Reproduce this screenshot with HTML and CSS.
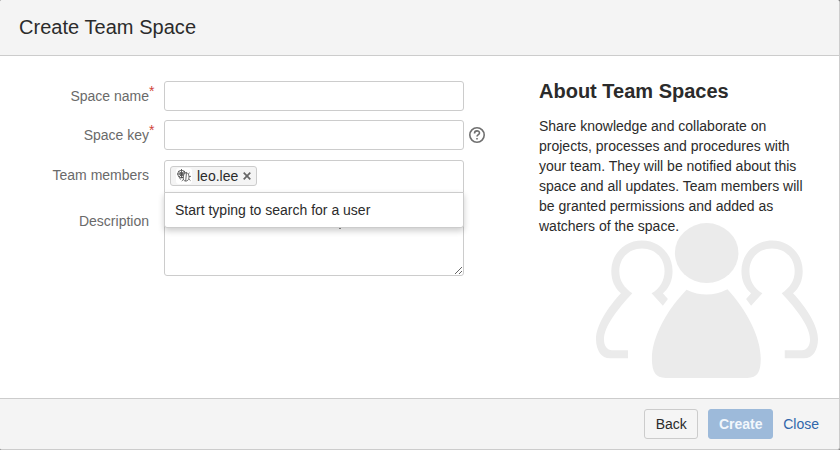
FILE: index.html
```
<!DOCTYPE html>
<html lang="en">
<head>
<meta charset="utf-8">
<title>Create Team Space</title>
<link rel="stylesheet" href="styles.css">
</head>
<body>
<section class="dialog">
  <header class="dialog-header"><h1>Create Team Space</h1></header>
  <main class="dialog-body">
    <form class="form">
      <div class="row">
        <label class="label" for="name">Space name<span class="required">*</span></label>
        <input class="field" id="name" type="text">
      </div>
      <div class="row">
        <label class="label" for="key">Space key<span class="required">*</span></label>
        <input class="field" id="key" type="text">
        <svg class="help" viewBox="0 0 16 16"><circle cx="8" cy="8" r="7.200"/><path d="M5.500 6.400C5.500 3.100 10.500 3.200 10.500 6C10.500 7.700 8 7.500 8 9.500M8 10.900V12.600"/></svg>
      </div>
      <div class="row row-members">
        <span class="label">Team members</span>
        <div class="picker">
          <span class="chip">
            <svg class="avatar" viewBox="0 0 16 16"><rect width="16" height="16" rx="3" fill="#fff"/><g fill="none" stroke="#484848" stroke-width=".8"><circle cx="5.500" cy="6" r="3.800"/><circle cx="5.500" cy="6" r="1.700"/><path d="M5.500 1V10M1 6H9.500M2.500 3L8 8.500M8.500 3L3 9M3.500 9.500L4.500 11.500"/><path fill="#fff" d="M10.300 4.500C13.300 5.200 13.800 10.500 11.800 12.300C9.800 14 7.200 13 7.200 10C7.200 7.200 8.300 4.900 10.300 4.500Z"/><path d="M10.500 4.500L9.700 13M9 4.800L8 3.500M12.300 6L13.600 4.800M13 8.700L15 8.300M12.800 11L14.500 12.600M7.300 9.500L5.200 9.300M7.400 11.500L5.700 13"/></g></svg>
            <span class="chip-name">leo.lee</span>
            <svg class="remove" viewBox="0 0 8 8"><path d="M.7.7L7.300 7.300M7.300.7L.7 7.300"/></svg>
          </span>
          <div class="dropdown">Start typing to search for a user</div>
        </div>
      </div>
      <div class="row row-description">
        <label class="label" for="description">Description</label>
        <textarea class="field textarea" id="description"></textarea>
      </div>
    </form>
    <aside class="about">
      <svg class="people" viewBox="48 38 667 465">
        <ellipse cx="380.500" cy="128" rx="95.500" ry="90"/>
        <path d="M320 238Q382 268 443 237C500 299 543 380 543 445C543 485 533 503 503 503H257C227 503 216 485 216 445C216 380 261 299 320 238Z"/>
        <path id="person" d="M123 249C104 233 94 210 94 182C94 130 134 90 186 90C238 90 278 130 278 182C278 210 268 233 249 249L264 266L249 286L215 249C240 235 254 210 254 182C254 143 226 114 186 114C147 114 118 143 118 182C118 212 133 232 157 249C110 300 72 350 72 388C72 408 82 420 96 420H144V444H90C64 444 48 420 48 386C48 345 85 290 123 249Z"/>
        <use href="#person" transform="translate(763 0) scale(-1 1)"/>
        <path d="M615 420H620V444H615Z"/>
      </svg>
      <h2>About Team Spaces</h2>
      <p>Share knowledge and collaborate on projects, processes and procedures with your team. They will be notified about this space and all updates. Team members will be granted permissions and added as watchers of the space.</p>
    </aside>
  </main>
  <footer class="dialog-footer">
    <button class="button">Back</button>
    <button class="button primary">Create</button>
    <a class="close">Close</a>
  </footer>
</section>
</body>
</html>
```
FILE: styles.css
```
* { box-sizing: border-box; }
body {
  margin: 0;
  background: #777;
  color: #2b2b2b;
  font: 14px/20px "Liberation Sans", Arial, sans-serif;
}
h1, h2, p { margin: 0; }
.dialog {
  display: grid;
  grid-template-rows: 56px 1fr 51px;
  width: 840px;
  height: 450px;
  overflow: hidden;
  background: #fff;
  border-right: 1px solid #ccc;
  border-bottom: 1px solid #ccc;
  border-radius: 2px 3px 3px 2px;
}
.dialog-header {
  padding: 12px 19px;
  background: #f4f4f4;
  border-bottom: 1px solid #ccc;
}
h1 { font-size: 20px; line-height: 30px; font-weight: normal; letter-spacing: .04px; }
.dialog-body { display: flex; gap: 39px; }
.form {
  display: flex;
  flex-direction: column;
  gap: 9px;
  width: 500px;
  padding-top: 25px;
}
.row { display: flex; align-items: flex-start; }
.label {
  position: relative;
  width: 149px;
  margin-right: 15px;
  padding-top: 5px;
  color: #6a6a6a;
  text-align: right;
}
.required {
  position: absolute;
  top: 0;
  left: 149px;
  color: #d04437;
}
.field {
  width: 300px;
  height: 30px;
  border: 1px solid #ccc;
  border-radius: 3px;
  background: #fff;
}
.help {
  width: 16px;
  height: 16px;
  margin: 7px 0 0 5px;
  fill: none;
  stroke: #707070;
  stroke-width: 1.6;
}
.row-members { margin-top: 1px; }
.picker {
  position: relative;
  width: 300px;
  height: 33px;
  padding: 5px;
  border: 1px solid #ccc;
  border-radius: 3px 3px 0 0;
}
.chip {
  display: flex;
  align-items: center;
  width: 87px;
  height: 20px;
  padding-left: 5px;
  background: #f4f4f4;
  border: 1px solid #ccc;
  border-radius: 3px;
}
.avatar { width: 16px; height: 16px; margin-right: 5px; }
.chip-name { width: 42px; }
.remove {
  width: 8px;
  height: 8px;
  margin-left: 4px;
  fill: none;
  stroke: #666;
  stroke-width: 1.7;
}
.dropdown {
  position: absolute;
  z-index: 1;
  top: 31px;
  left: -1px;
  width: 300px;
  height: 36px;
  padding: 7px 10px;
  background: #fff;
  border: 1px solid #ccc;
  border-radius: 0 0 3px 3px;
  box-shadow: 0 3px 6px rgba(0, 0, 0, .2);
}
.dropdown::after {
  content: "";
  position: absolute;
  top: 35px;
  left: 174px;
  width: 2px;
  height: 1px;
  background: #777;
}
.row-description .label { padding-top: 9px; }
.textarea { display: block; height: 74px; resize: vertical; }
.about { position: relative; width: 272px; padding-top: 22px; }
h2 { font-size: 20px; line-height: 26px; }
.about p { position: relative; margin-top: 12px; }
.people {
  position: absolute;
  top: 167px;
  left: 57px;
  width: 222px;
  height: 155px;
  fill: #ebebeb;
}
.dialog-footer {
  display: flex;
  justify-content: flex-end;
  gap: 10px;
  padding: 10px 20px 10px 0;
  background: #f4f4f4;
  border-top: 1px solid #ccc;
}
.button {
  height: 30px;
  width: 54px;
  padding: 0;
  border: 1px solid #ccc;
  border-radius: 3px;
  background: #f5f5f5;
  color: #2b2b2b;
  font: inherit;
}
.primary {
  width: 65px;
  border-color: #9dbada;
  background: #9dbada;
  color: #f2f7fc;
  font-weight: bold;
}
.close { color: #3067ab; line-height: 30px; }
```
